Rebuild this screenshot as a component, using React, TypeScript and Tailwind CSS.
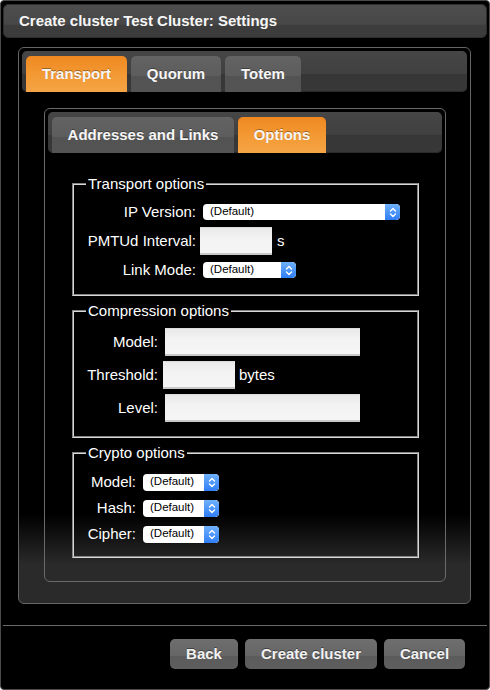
import React from "react";

const font = { fontFamily: '"Liberation Sans", Arial, Helvetica, sans-serif' };

function Stepper() {
  return (
    <div className="flex h-full w-[15px] items-center justify-center rounded-r-[4px] bg-[linear-gradient(to_bottom,#6fb1fb,#2f7df6)]">
      <svg width="8" height="11" viewBox="0 0 8 11" fill="none" stroke="white" strokeWidth="1.4" strokeLinecap="round" strokeLinejoin="round">
        <path d="M1.5 4 L4 1.5 L6.5 4" />
        <path d="M1.5 7 L4 9.5 L6.5 7" />
      </svg>
    </div>
  );
}

function Select({ w, h = 16 }: { w: number; h?: number }) {
  return (
    <div
      className="flex items-center overflow-hidden rounded-[4px] bg-white shadow-[0_0_0_0.5px_rgba(0,0,0,0.3)]"
      style={{ width: w, height: h }}
    >
      <span className="flex-1 pl-[7px] text-[11.5px] leading-none text-black">(Default)</span>
      <Stepper />
    </div>
  );
}

function Input({ w }: { w: number }) {
  return (
    <div
      className="h-[28px] border-t border-t-[#dcdcdc] border-b-2 border-b-[#c9c9c9] bg-[linear-gradient(to_bottom,#e9e9e9,#f3f3f3_40%,#f5f5f5)]"
      style={{ width: w }}
    />
  );
}

function Tab({ label, active, w }: { label: string; active?: boolean; w: number }) {
  return (
    <div
      className={
        "flex h-[36px] items-center justify-center rounded-t-[5px] text-[15px] font-bold text-[#f6f6f6] [text-shadow:0_-1px_0_rgba(0,0,0,0.35)] " +
        (active
          ? "bg-[linear-gradient(to_bottom,#ef8820,#f39a35_55%,#f5a445)]"
          : "bg-[linear-gradient(to_bottom,#636363,#5d5d5d_55%,#535353_56%,#545454)]")
      }
      style={{ width: w }}
    >
      {label}
    </div>
  );
}

function TabBar({ children }: { children: React.ReactNode }) {
  return (
    <div className="flex h-[41px] items-end gap-[4px] rounded-[5px] bg-[linear-gradient(to_bottom,#464646,#404040_55%,#363636_56%,#383838)] pl-[4px] shadow-[inset_0_-1px_0_#2a2a2a]">
      {children}
    </div>
  );
}

function Legend({ children }: { children: React.ReactNode }) {
  return <legend className="ml-[12px] px-[2px] text-[15px] leading-[17px] text-white">{children}</legend>;
}

const fs = "mx-0 border-2 [border-style:groove] border-[#d8d8d8]";
const lbl = "text-right text-[15px] text-white";

export default function App() {
  return (
    <div style={font} className="flex h-[690px] w-[490px] flex-col overflow-hidden rounded-[4px] border border-[#4a4a4a] bg-black">
      {/* title */}
      <div className="mx-[2px] mt-[3px] flex h-[34px] items-center rounded-[6px] bg-[linear-gradient(to_bottom,#4e4e4e,#474747_60%,#3d3d3d_61%,#3b3b3b)] pl-[16px] text-[15px] font-bold text-[#f6f6f6] shadow-[inset_0_0_0_1px_#2e2e2e]">
        Create cluster Test Cluster: Settings
      </div>

      {/* outer panel */}
      <div className="ml-[17px] mr-[18px] mt-[9px] flex h-[557px] flex-col rounded-[6px] border border-[#666] bg-[linear-gradient(to_bottom,#000_84%,#2a2a2a_93%)] p-[3px]">
        <TabBar>
          <Tab label="Transport" active w={101} />
          <Tab label="Quorum" w={90} />
          <Tab label="Totem" w={76} />
        </TabBar>

        {/* inner panel */}
        <div className="ml-[22px] mr-[21px] mt-[16px] flex h-[474px] flex-col rounded-[6px] border border-[#6a6a6a] p-[3px]">
          <TabBar>
            <Tab label="Addresses and Links" w={182} />
            <Tab label="Options" active w={88} />
          </TabBar>

          {/* Transport options */}
          <fieldset className={fs + " ml-[24px] mr-[23px] mt-[22px] pb-[12px] pt-[8px]"}>
            <Legend>Transport options</Legend>
            <div className="flex h-[24px] items-center">
              <span className={lbl + " w-[122px]"}>IP Version:</span>
              <div className="ml-[7px]"><Select w={197} /></div>
            </div>
            <div className="mt-[3px] flex h-[28px] items-center">
              <span className={lbl + " w-[122px]"}>PMTUd Interval:</span>
              <div className="ml-[4px]"><Input w={72} /></div>
              <span className="ml-[5px] text-[15px] text-white">s</span>
            </div>
            <div className="mt-[3px] flex h-[24px] items-center">
              <span className={lbl + " w-[122px]"}>Link Mode:</span>
              <div className="ml-[7px]"><Select w={93} /></div>
            </div>
          </fieldset>

          {/* Compression options */}
          <fieldset className={fs + " ml-[24px] mr-[23px] mt-[6px] pb-[14px] pt-[9px]"}>
            <Legend>Compression options</Legend>
            <div className="flex h-[28px] items-center">
              <span className={lbl + " w-[84px]"}>Model:</span>
              <div className="ml-[7px]"><Input w={195} /></div>
            </div>
            <div className="mt-[5px] flex h-[28px] items-center">
              <span className={lbl + " w-[84px]"}>Threshold:</span>
              <div className="ml-[5px]"><Input w={72} /></div>
              <span className="ml-[4px] text-[15px] text-white">bytes</span>
            </div>
            <div className="mt-[5px] flex h-[28px] items-center">
              <span className={lbl + " w-[84px]"}>Level:</span>
              <div className="ml-[7px]"><Input w={195} /></div>
            </div>
          </fieldset>

          {/* Crypto options */}
          <fieldset className={fs + " ml-[24px] mr-[23px] mt-[6px] pb-[9px] pt-[8px]"}>
            <Legend>Crypto options</Legend>
            {["Model:", "Hash:", "Cipher:"].map((l) => (
              <div key={l} className="flex h-[26px] items-center">
                <span className={lbl + " w-[62px]"}>{l}</span>
                <div className="ml-[7px]"><Select w={76} h={17} /></div>
              </div>
            ))}
          </fieldset>
        </div>
      </div>

      {/* footer */}
      <div className="mx-[2px] mt-[21px] border-t border-[#6a6a6a]" />
      <div className="flex justify-end gap-[7px] pr-[24px] pt-[13px]">
        {[
          ["Back", 68],
          ["Create cluster", 132],
          ["Cancel", 81],
        ].map(([l, w]) => (
          <div
            key={l as string}
            className="flex h-[30px] items-center justify-center rounded-[5px] bg-[linear-gradient(to_bottom,#6e6e6e,#666_55%,#5b5b5b_56%,#5e5e5e)] text-[15px] font-bold text-[#f2f2f2] [text-shadow:0_-1px_0_rgba(0,0,0,0.4)]"
            style={{ width: w as number }}
          >
            {l}
          </div>
        ))}
      </div>
    </div>
  );
}
